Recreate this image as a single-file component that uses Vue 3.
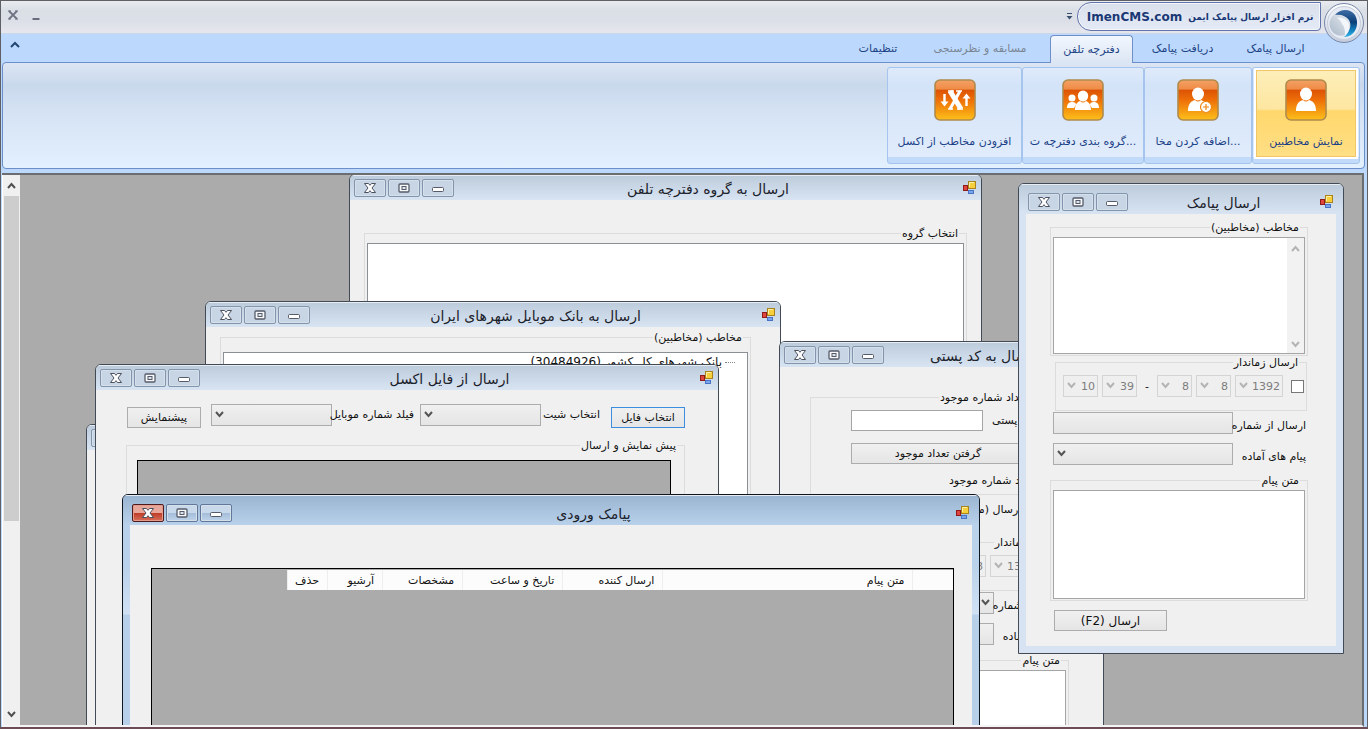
<script setup>
const tabs = [
  { label: 'ارسال پیامک', width: 87 },
  { label: 'دریافت پیامک', width: 85 },
  { label: 'دفترچه تلفن', width: 83, active: true },
  { label: 'مسابقه و نظرسنجی', width: 126, muted: true },
  { label: 'تنظیمات', width: 64 }
]

const actions = [
  { id: 'person', label: 'نمایش مخاطبین', width: 108, active: true },
  { id: 'add', label: 'اضافه کردن مخا...', width: 108 },
  { id: 'group', label: 'گروه بندی دفترچه ت...', width: 122 },
  { id: 'excel', label: 'افزودن مخاطب از اکسل', width: 135 }
]

/* Stacking follows the order of the list, the last window is on top. */
const windows = [
  { id: 'phonebook', title: 'ارسال به گروه دفترچه تلفن', x: 329, y: -1, w: 633, h: 560, kind: 'plain' },
  { id: 'cities', title: 'ارسال به بانک موبایل شهرهای ایران', x: 185, y: 126, w: 576, h: 480, kind: 'plain' },
  { id: 'postal', title: 'ارسال به کد پستی', x: 759, y: 166, w: 325, h: 640, kind: 'plain' },
  { id: 'blank', title: '', x: 66, y: 249, w: 500, h: 400, kind: 'plain' },
  { id: 'excel', title: 'ارسال از فایل اکسل', x: 75, y: 189, w: 624, h: 460, kind: 'plain' },
  { id: 'sms', title: 'ارسال پیامک', x: 998, y: 8, w: 326, h: 471, kind: 'framed' },
  { id: 'inbox', title: 'پیامک ورودی', x: 102, y: 319, w: 858, h: 420, kind: 'framed active' }
]

const dateParts = [
  { name: 'سال', value: '1392', wide: true },
  { name: 'ماه', value: '8' },
  { name: 'روز', value: '8' }
]
const timeParts = [
  { name: 'دقیقه', value: '39' },
  { name: 'ساعت', value: '10' }
]

const columns = [
  { label: '', width: 40 },
  { label: 'متن پیام', width: 250 },
  { label: 'ارسال کننده', width: 100 },
  { label: 'تاریخ و ساعت', width: 100 },
  { label: 'مشخصات', width: 80 },
  { label: 'آرشیو', width: 55 },
  { label: 'حذف', width: 40 }
]

const place = (w) => ({ left: w.x + 'px', top: w.y + 'px', width: w.w + 'px', height: w.h + 'px' })
</script>

<template>
  <div class="app" dir="rtl">
    <header class="titlebar">
      <div class="capsule">
        <span class="app-name">نرم افزار ارسال پیامک ایمن</span>
        <span class="site" dir="ltr">ImenCMS.com</span>
      </div>
      <button class="quick" aria-label="سفارشی کردن">
        <svg width="7" height="8" viewBox="0 0 7 8"><path d="M1 1.5h5" stroke="#3b4f70" /><path d="M0.5 4h6l-3 3.5z" fill="#3b4f70" /></svg>
      </button>
      <div class="app-controls">
        <button aria-label="کوچک کردن">
          <svg width="10" height="12" viewBox="0 0 10 12"><path d="M1.5 10h7" stroke="#6a6e7c" stroke-width="2" /></svg>
        </button>
        <button aria-label="بستن">
          <svg width="10" height="10" viewBox="0 0 10 10"><path d="M1 1l8 8M9 1l-8 8" stroke="#6f7484" stroke-width="1.8" /><path d="M0 1h3M7 1h3M0 9h3M7 9h3" stroke="#6f7484" /></svg>
        </button>
      </div>
      <svg class="orb" width="42" height="42" viewBox="0 0 42 42">
        <defs>
          <linearGradient id="ring" x1="0" y1="0" x2="0" y2="1"><stop offset="0" stop-color="#ffffff" /><stop offset="1" stop-color="#c3cbdb" /></linearGradient>
          <linearGradient id="swirl" x1="0" y1="0" x2="0" y2="1"><stop offset="0" stop-color="#3f6ea6" /><stop offset="0.45" stop-color="#0a3f78" /><stop offset="0.75" stop-color="#1180be" /><stop offset="1" stop-color="#35b6e8" /></linearGradient>
          <linearGradient id="ball" x1="0" y1="1" x2="1" y2="0"><stop offset="0" stop-color="#a9b8c9" /><stop offset="1" stop-color="#eef1f5" /></linearGradient>
        </defs>
        <circle cx="21" cy="21" r="19.5" fill="url(#ring)" stroke="#7787a8" />
        <circle cx="21" cy="21" r="16.5" fill="#e6eaf3" stroke="#c5cedd" />
        <circle cx="18" cy="22" r="11.5" fill="url(#ball)" />
        <path d="M12 13C17 7 27 6 32 13c4 7 2 16-4 20-2 1-4 2-7 2 6-5 8-12 5-17-3-4-8-6-14-5z" fill="url(#swirl)" />
        <path d="M14 16c5-1 10 1 12 6 1 5-1 9-4 12 0-5 0-9-3-12-1-3-3-5-5-6z" fill="#f3f6fa" />
      </svg>
    </header>

    <nav class="tabs">
      <button
        v-for="t in tabs"
        :key="t.label"
        class="tab"
        :class="{ active: t.active, muted: t.muted }"
        :style="{ width: t.width + 'px' }"
      >{{ t.label }}</button>
      <button class="collapse" aria-label="جمع کردن نوار">
        <svg width="10" height="7" viewBox="0 0 10 7"><path d="M1 6l4-4 4 4" fill="none" stroke="#24456f" stroke-width="2" /></svg>
      </button>
    </nav>

    <section class="ribbon">
      <div v-for="a in actions" :key="a.id" class="group" :style="{ width: a.width + 'px' }">
        <button class="action" :class="{ active: a.active }">
          <svg width="42" height="42" viewBox="0 0 42 42">
            <defs>
              <linearGradient :id="'tile-' + a.id" x1="0" y1="0" x2="0" y2="1">
                <stop offset="0" stop-color="#f3a266" /><stop offset="0.23" stop-color="#ef8b45" />
                <stop offset="0.25" stop-color="#dc5205" /><stop offset="0.5" stop-color="#ee6f08" />
                <stop offset="1" stop-color="#fcc01a" />
              </linearGradient>
            </defs>
            <rect x="1" y="1" width="40" height="40" rx="5" :fill="'url(#tile-' + a.id + ')'" stroke="#b08a4c" stroke-width="1.6" />
            <g v-if="a.id === 'person'" fill="#fff">
              <ellipse cx="21" cy="15" rx="6" ry="6.5" />
              <path d="M11 32c0-7 3-10 7-11 2 2 4 2 6 0 4 1 7 4 7 11z" />
            </g>
            <g v-else-if="a.id === 'add'" fill="#fff">
              <ellipse cx="21" cy="15" rx="6" ry="6.5" />
              <path d="M11 32c0-7 3-10 7-11 2 2 4 2 6 0 3 1 5 3 6 6v5z" />
              <circle cx="29" cy="28" r="5.5" stroke="#ee8511" stroke-width="1.2" />
              <path d="M29 25v6M26 28h6" stroke="#ee8511" stroke-width="1.2" />
            </g>
            <g v-else-if="a.id === 'group'" fill="#fff">
              <circle cx="10" cy="19" r="3.5" /><circle cx="32" cy="19" r="3.5" />
              <path d="M5 29c0-4 2-6 5-6s4 1 4 3l-2 3zM37 29c0-4-2-6-5-6s-4 1-4 3l2 3z" />
              <ellipse cx="21" cy="17" rx="5.2" ry="5.5" />
              <path d="M13 31c0-5 2-8 5-9 2 2 4 2 6 0 3 1 5 4 5 9z" />
            </g>
            <g v-else fill="none" stroke="#fff">
              <path d="M16 12l11 18" stroke-width="5" />
              <path d="M26 12L16 30" stroke-width="3" />
              <path d="M14 12h6M22 12h6M14 30h5M23 30h6" stroke-width="1.6" />
              <path d="M10.500 15v11M32.500 27V17" stroke-width="2.4" />
              <path d="M6.500 22.500h8l-4 5zM28.500 19.500h8l-4-5z" fill="#fff" stroke="none" />
            </g>
          </svg>
          <span dir="ltr">{{ a.label }}</span>
        </button>
      </div>
    </section>

    <main class="workspace">
      <div class="canvas">
        <section v-for="w in windows" :key="w.id" class="win" :class="w.kind" :style="place(w)">
          <header class="win-bar">
            <svg class="win-icon" width="15" height="14" viewBox="0 0 15 14">
              <rect x="6.500" y="0.500" width="7" height="7" fill="#f7cf3c" stroke="#a9821c" />
              <path d="M7.500 6V1.500H12" stroke="#fdf0a8" fill="none" />
              <rect x="1.500" y="4.500" width="4" height="5" fill="#e0463c" stroke="#8f1b1b" />
              <rect x="6.500" y="9.500" width="5" height="3" fill="#79a7ee" stroke="#4a72c4" />
            </svg>
            <h2>{{ w.title }}</h2>
            <div class="win-controls">
              <button aria-label="کوچک کردن">
                <svg width="12" height="10" viewBox="0 0 12 10"><rect x="0.500" y="4.500" width="11" height="4" rx="1" fill="#fff" stroke="#565b69" /></svg>
              </button>
              <button aria-label="بزرگ کردن">
                <svg width="12" height="10" viewBox="0 0 12 10"><rect x="1" y="1" width="10" height="8" rx="1" fill="#f6f8fa" stroke="#565b69" stroke-width="1.3" /><rect x="4" y="3.500" width="4" height="3" fill="#dfe5ec" stroke="#565b69" /></svg>
              </button>
              <button class="close" aria-label="بستن">
                <svg width="12" height="10" viewBox="0 0 12 10"><path d="M0.500 0.500h4L6 2.300 7.500 0.500h4L8 5l3.500 4.500h-4L6 7.700 4.500 9.500h-4L4 5z" fill="#fff" stroke="#4b505d" stroke-linejoin="round" /></svg>
              </button>
            </div>
          </header>

          <div class="win-body" :class="w.id">
            <fieldset v-if="w.id === 'phonebook'" class="box grow">
              <legend>انتخاب گروه</legend>
              <div class="list"></div>
            </fieldset>

            <fieldset v-else-if="w.id === 'cities'" class="box grow">
              <legend>مخاطب (مخاطبین)</legend>
              <div class="list tree"><span class="twig"></span><span>بانک شهرهای کل کشور (30484926)</span></div>
            </fieldset>

            <template v-else-if="w.id === 'excel'">
              <div class="excel-row">
                <button class="btn focus">انتخاب فایل</button>
                <label class="sheet" for="sheet">انتخاب شیت</label>
                <span class="combo"><select id="sheet"><option></option></select><svg width="9" height="7" viewBox="0 0 9 7"><path d="M1 1l3.500 4L8 1" /></svg></span>
                <label class="field" for="field">فیلد شماره موبایل</label>
                <span class="combo"><select id="field"><option></option></select><svg width="9" height="7" viewBox="0 0 9 7"><path d="M1 1l3.500 4L8 1" /></svg></span>
                <button class="btn last">پیشنمایش</button>
              </div>
              <fieldset class="box grow">
                <legend>پیش نمایش و ارسال</legend>
                <div class="sheet-grid"></div>
              </fieldset>
            </template>

            <div v-else-if="w.id === 'inbox'" class="grid">
              <table>
                <thead>
                  <tr><th v-for="c in columns" :key="c.label" scope="col" :style="{ width: c.width + 'px' }">{{ c.label }}</th></tr>
                </thead>
              </table>
            </div>

            <template v-else-if="w.id === 'sms' || w.id === 'postal'">
              <fieldset v-if="w.id === 'sms'" class="box to">
                <legend>مخاطب (مخاطبین)</legend>
                <div class="memo">
                  <textarea aria-label="مخاطب"></textarea>
                  <div class="memo-scroll">
                    <svg width="9" height="7" viewBox="0 0 9 7"><path d="M1 6l3.500-4L8 6" /></svg>
                    <svg width="9" height="7" viewBox="0 0 9 7"><path d="M1 1l3.500 4L8 1" /></svg>
                  </div>
                </div>
              </fieldset>
              <template v-else>
                <fieldset class="box lookup">
                  <legend>تعداد شماره موجود</legend>
                  <div class="code"><label for="code">کد پستی</label><input id="code" type="text" /></div>
                  <button class="btn">گرفتن تعداد موجود</button>
                  <p>تعداد شماره موجود</p>
                </fieldset>
                <p class="method">روش ارسال (مخاطبین)</p>
              </template>

              <fieldset class="box timed">
                <legend>ارسال زماندار</legend>
                <div class="when">
                  <input type="checkbox" aria-label="ارسال زماندار" />
                  <span v-for="p in dateParts" :key="p.name" class="combo off" :class="{ wide: p.wide }"><select disabled :aria-label="p.name"><option>{{ p.value }}</option></select><svg width="9" height="7" viewBox="0 0 9 7"><path d="M1 1l3.500 4L8 1" /></svg></span>
                  <span class="dash">-</span>
                  <span v-for="p in timeParts" :key="p.name" class="combo off"><select disabled :aria-label="p.name"><option>{{ p.value }}</option></select><svg width="9" height="7" viewBox="0 0 9 7"><path d="M1 1l3.500 4L8 1" /></svg></span>
                </div>
              </fieldset>

              <div class="pick">
                <label :for="w.id + '-from'">ارسال از شماره</label>
                <span class="combo from"><select :id="w.id + '-from'"><option></option></select><svg v-if="w.id === 'postal'" width="9" height="7" viewBox="0 0 9 7"><path d="M1 1l3.500 4L8 1" /></svg></span>
              </div>
              <div class="pick">
                <label :for="w.id + '-ready'">پیام های آماده</label>
                <span class="combo"><select :id="w.id + '-ready'"><option></option></select><svg width="9" height="7" viewBox="0 0 9 7"><path d="M1 1l3.500 4L8 1" /></svg></span>
              </div>

              <fieldset class="box message">
                <legend>متن پیام</legend>
                <textarea aria-label="متن پیام"></textarea>
              </fieldset>
              <button v-if="w.id === 'sms'" class="btn send">ارسال (F2)</button>
            </template>
          </div>
        </section>
      </div>

      <div class="scroll">
        <button aria-label="بالا"><svg width="9" height="7" viewBox="0 0 9 7"><path d="M1 6l3.500-4L8 6" /></svg></button>
        <div class="track"><div class="thumb"></div></div>
        <button aria-label="پایین"><svg width="9" height="7" viewBox="0 0 9 7"><path d="M1 1l3.500 4L8 1" /></svg></button>
      </div>
    </main>
  </div>
</template>

<style>
body {
  margin: 0;
  overflow: hidden;
}
</style>

<style scoped>
* {
  box-sizing: border-box;
}
.app {
  display: flex;
  flex-direction: column;
  height: 100vh;
  background: #bcd9fc;
  border: 1px solid #5e6066;
  border-bottom: 2px solid #6d4c55;
  font-family: "DejaVu Sans", sans-serif;
  font-size: 11px;
  color: #111;
}
button,
select,
input,
textarea {
  font: inherit;
  color: inherit;
  margin: 0;
}
button {
  padding: 0;
  border: 0;
  background: none;
}

/* Application title bar */
.titlebar {
  position: relative;
  flex: none;
  display: flex;
  align-items: flex-start;
  height: 33px;
  padding-right: 46px;
  background: linear-gradient(#e9edf0, #dadfe6 9px, #dcdfe7 20px, #e6e7ee);
  border-bottom: 1px solid #cbd8ea;
}
.capsule {
  display: flex;
  align-items: center;
  justify-content: center;
  gap: 6px;
  width: 244px;
  height: 29px;
  margin-top: 1px;
  padding-left: 2px;
  border: 1px solid #6274ab;
  border-radius: 14px 0 4px 14px;
  background: linear-gradient(#d9e0ec, #e4ebf7);
  box-shadow: inset 0 0 0 1px #f3f6fb;
  color: #1a3875;
  font-weight: bold;
  white-space: nowrap;
}
.app-name {
  font-size: 9px;
}
.site {
  font-size: 12px;
}
.quick {
  margin: 9px 4px 0 0;
}
.app-controls {
  display: flex;
  gap: 13px;
  margin: 8px auto 0 7px;
}
.app-controls button {
  height: 12px;
}
.app-controls svg {
  display: block;
}
.orb {
  position: absolute;
  top: 1px;
  right: 2px;
  z-index: 2;
}

/* Ribbon tabs */
.tabs {
  flex: none;
  display: flex;
  gap: 7px;
  height: 28px;
  padding: 1px 48px 0 0;
  background: #bcd9fd;
}
.tab {
  height: 27px;
  color: #1e4487;
  white-space: nowrap;
}
.tab.muted {
  color: #7a8594;
}
.tab.active {
  position: relative;
  height: 28px;
  border: 1px solid #6f8fcb;
  border-bottom: 0;
  border-radius: 4px 4px 0 0;
  background: linear-gradient(#f2f7fe, #dbe5f3);
}
.collapse {
  margin: 0 auto 8px 9px;
}

/* Ribbon panel */
.ribbon {
  flex: none;
  display: flex;
  height: 107px;
  margin: 0 2px 0 1px;
  padding: 4px;
  border: 1px solid #6c8fcb;
  border-radius: 4px;
  background: linear-gradient(#dce5f3, #c9d9ec 22px, #d5e3f4 50px, #e3f0fe);
}
.group {
  height: 97px;
  padding: 2px 3px 7px;
  border: 1px solid #a5c5ee;
  border-radius: 3px;
  background:
    linear-gradient(#c1dafa, #c1dafa) bottom / 100% 6px no-repeat,
    linear-gradient(#dfebfb, #d3e3f8 18px, #e2edfc);
}
.action {
  display: flex;
  flex-direction: column;
  align-items: center;
  justify-content: space-between;
  width: 100%;
  height: 87px;
  padding: 9px 0;
  color: #1b3f86;
  white-space: nowrap;
  overflow: hidden;
}
.action.active {
  padding: 8px 0;
  border: 1px solid #f0c668;
  outline: 2px solid #fff;
  background: linear-gradient(#fdeeb9, #fde6a0 38px, #ffd76c 40px, #ffdf85);
}
.action svg {
  flex: none;
}

/* Workspace */
.workspace {
  flex: 1;
  min-height: 0;
  display: flex;
  margin: 4px 3px 0 1px;
  border: solid #6b6d70;
  border-width: 2px 2px 0 0;
  border-bottom: 2px solid #f4f4f6;
  background: #ababab;
}
.canvas {
  position: relative;
  flex: 1;
  overflow: hidden;
}
.scroll {
  flex: none;
  display: flex;
  flex-direction: column;
  width: 18px;
  padding: 0 1px;
  background: #f0f0f0;
  border-left: 1px solid #fff;
}
.scroll button {
  height: 21px;
}
.scroll .track {
  flex: 1;
}
.thumb {
  height: 64%;
  background: #cdcdcd;
}
.scroll path {
  fill: none;
  stroke: #505050;
  stroke-width: 2;
}

/* Child windows */
.win {
  position: absolute;
  isolation: isolate;
  display: flex;
  flex-direction: column;
  border: 1px solid #414a55;
  border-radius: 6px 6px 0 0;
  background: #f0f0f0;
  overflow: hidden;
}
.win-bar {
  flex: none;
  display: flex;
  align-items: flex-start;
  height: 25px;
  padding: 4px 4px 0;
  background: linear-gradient(#bccbdb, #d8e4f2);
  box-shadow: inset 0 1px #e7edf3;
}
.win-icon {
  margin-top: 2px;
}
.win-bar h2 {
  flex: 1;
  margin: 0;
  font-size: 14px;
  font-weight: normal;
  line-height: 20px;
  text-align: center;
  color: #1c222b;
  white-space: nowrap;
}
.win-controls {
  display: flex;
  gap: 2px;
}
.win-controls button {
  display: flex;
  align-items: center;
  justify-content: center;
  width: 32px;
  height: 18px;
  border: 1px solid #8295ac;
  border-radius: 2px;
  background: #c7d5e4;
  box-shadow: inset 0 0 0 1px #d6e0eb;
}
.win-body {
  flex: 1;
  min-height: 0;
  display: flex;
  flex-direction: column;
  background: #f0f0f0;
}
.framed {
  padding: 0 7px 7px;
  background: #d7e3f2;
}
.framed .win-bar {
  height: 30px;
  margin: 0 -7px;
  padding: 9px 9px 0;
}
.framed.active {
  border-color: #10161f;
  background: linear-gradient(#b9d1ea 70px, #d0e1f4 119px, #b7cfe8 120px);
}
.active .win-bar {
  background: linear-gradient(#99b4d1, #b9d1ea);
}
.active .win-controls button {
  border-color: #61789b;
  background: linear-gradient(#c8d9ec 48%, #a3bcd9 50%, #bfd4ea);
}
.active .win-controls .close {
  border-color: #4f1a1c;
  background: linear-gradient(#e8a79b 48%, #bf3b26 50%, #d7705a);
  box-shadow: inset 0 0 0 1px #e59b8c;
}

/* Form parts */
.box {
  display: flex;
  flex-direction: column;
  flex: none;
  min-width: 0;
  margin: 0;
  padding: 3px 2px 2px;
  border: 1px solid #dcdcdc;
}
.box.grow {
  flex: 1;
}
legend {
  margin-right: 5px;
  padding: 0 1px;
  line-height: 13px;
}
.list,
textarea {
  flex: 1;
  border: 1px solid #8b8f96;
  background: #fff;
}
textarea {
  display: block;
  width: 100%;
  border-color: #a5a5a5;
  resize: none;
}
.btn {
  height: 21px;
  border: 1px solid #acacac;
  background: linear-gradient(#f0f0f0, #e5e5e5);
  white-space: nowrap;
}
.btn.focus {
  border-color: #3c8fe0;
}
.combo {
  position: relative;
  flex: none;
  display: block;
  height: 22px;
}
.combo select {
  display: block;
  width: 100%;
  height: 100%;
  padding: 0 2px;
  appearance: none;
  border: 1px solid #acacac;
  border-radius: 0;
  background: linear-gradient(#f0f0f0, #e5e5e5);
}
.combo svg {
  position: absolute;
  left: 4px;
  top: 7px;
}
.combo path,
.memo-scroll path {
  fill: none;
  stroke: #555;
  stroke-width: 2;
}
.combo.off select {
  border-color: #d4d4d4;
  background: #efefef;
  color: #7d7d7d;
  opacity: 1;
}
.combo.off path,
.memo-scroll path {
  stroke: #b4b4b4;
}

.phonebook {
  padding: 27px 14px 10px;
}
.cities {
  padding: 4px 29px 10px 14px;
}
.cities .box {
  padding-top: 8px;
}
.tree {
  display: flex;
  align-items: flex-start;
  gap: 3px;
  padding: 2px 12px;
  font-size: 12px;
}
.twig {
  width: 10px;
  margin-top: 7px;
  border-top: 1px dotted #888;
}

.excel {
  padding: 14px 33px 10px 30px;
}
.excel-row {
  display: flex;
  align-items: flex-start;
  margin: 0 0 11px;
}
.excel-row .btn {
  width: 74px;
  margin-top: 3px;
}
.excel-row .combo {
  width: 121px;
}
.excel-row label {
  position: relative;
  z-index: 1;
  line-height: 22px;
  white-space: nowrap;
}
.excel-row .sheet {
  width: 59px;
  margin-right: 11px;
}
.excel-row .field {
  width: 82px;
  margin-right: 6px;
}
.excel-row .last {
  margin-right: 10px;
}
.excel .box {
  padding: 8px 13px 10px 10px;
}
.excel legend {
  margin-right: -6px;
}
.sheet-grid {
  flex: 1;
  border: 1px solid #000;
  background: #ababab;
}

.inbox {
  padding: 43px 18px 20px 21px;
}
.grid {
  flex: 1;
  border: 1px solid #000;
  padding-top: 1px;
  background: #ababab;
}
table {
  table-layout: fixed;
  width: 666px;
  border-collapse: collapse;
}
th {
  height: 20px;
  padding: 0 8px;
  border-left: 1px solid #eee;
  background: #fcfcfc;
  font-weight: normal;
  text-align: right;
  white-space: nowrap;
}

.sms,
.postal {
  padding: 7px 28px 0 24px;
}
.postal {
  padding: 24px 34px 0 30px;
}
.to {
  height: 135px;
}
.memo {
  display: flex;
  height: 117px;
  border: 1px solid #a5a5a5;
  background: #fff;
}
.memo textarea {
  width: auto;
  min-width: 0;
  border: 0;
}
.memo-scroll {
  display: flex;
  flex-direction: column;
  justify-content: space-between;
  align-items: center;
  width: 17px;
  padding: 7px 0 5px;
  background: #f2f2f2;
  order: -1;
}
.timed {
  height: 55px;
  margin: 0 1px 1px 5px;
}
.when {
  display: flex;
  align-items: center;
  gap: 4px;
  padding: 3px 0 0;
}
.postal .when {
  padding-right: 6px;
}
.when input {
  appearance: none;
  width: 13px;
  height: 13px;
  margin-left: 4px;
  border: 1px solid #777;
  background: #fff;
}
.when .combo {
  width: 35px;
}
.when .wide {
  width: 48px;
}
.dash {
  width: 12px;
  text-align: center;
}
.pick {
  display: flex;
  align-items: flex-start;
  margin: 0 2px 9px 3px;
}
.pick label {
  position: relative;
  z-index: 1;
  width: 73px;
  line-height: 28px;
  height: 22px;
  white-space: nowrap;
}
.pick .combo {
  flex: 1;
}
.postal .from svg {
  left: auto;
  right: 4px;
}
.message {
  height: 127px;
}
.message textarea {
  flex: none;
  height: 109px;
}
.send {
  flex: none;
  align-self: flex-end;
  width: 113px;
  margin: 9px 0 0 4px;
  font-size: 12px;
}
.lookup {
  height: 104px;
  padding: 6px 31px 0 40px;
}
.lookup legend {
  margin-right: 8px;
}
.code {
  display: flex;
  align-items: center;
  justify-content: flex-end;
  gap: 9px;
}
.code input {
  width: 132px;
  height: 21px;
  border: 1px solid #a5a5a5;
  background: #fff;
}
.lookup .btn {
  width: 174px;
  margin-top: 12px;
  align-self: flex-end;
}
.lookup p {
  margin: 10px 0 0;
  white-space: nowrap;
}
.method {
  margin: 8px 20px 20px 0;
  white-space: nowrap;
}
</style>
